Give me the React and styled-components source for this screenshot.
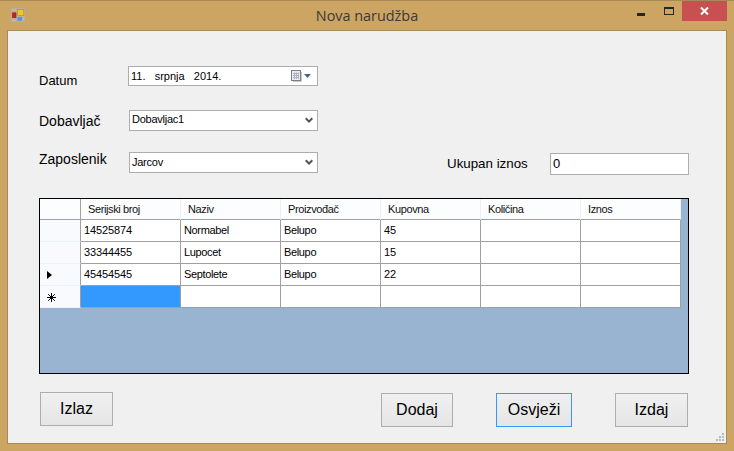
import React from 'react'
import styled, { createGlobalStyle } from 'styled-components'

const columns = ['Serijski broj', 'Naziv', 'Proizvođač', 'Kupovna', 'Količina', 'Iznos']

const rows = [
  { marker: '', cells: ['14525874', 'Normabel', 'Belupo', '45', '', ''] },
  { marker: '', cells: ['33344455', 'Lupocet', 'Belupo', '15', '', ''] },
  { marker: 'current', cells: ['45454545', 'Septolete', 'Belupo', '22', '', ''] },
  { marker: 'new', cells: ['', '', '', '', '', ''], selected: 0 },
]

function Chevron() {
  return (
    <svg width="8" height="7" viewBox="0 0 8 7">
      <path d="M0.7 1.2 L4 4.6 L7.3 1.2" fill="none" stroke="#555" strokeWidth="2" />
    </svg>
  )
}

function CalendarIcon() {
  return (
    <svg width="20" height="12" viewBox="0 0 20 12">
      <rect x="0.5" y="0.5" width="9" height="10" fill="#e9ebf0" stroke="#7d7d82" />
      <path d="M10.5 2V11.5H2" fill="none" stroke="#c9c9c9" />
      <path d="M2 3.5H8M2 5.5H8M2 7.5H8M3.5 2.5V9M5.5 2.5V9M7.5 2.5V9" stroke="#aab4c6" strokeWidth="1" />
      <path d="M13 4 H20 L16.5 8 Z" fill="#4d6185" />
    </svg>
  )
}

function AppIcon() {
  return (
    <svg width="14" height="14" viewBox="0 0 14 14">
      <rect x="0.5" y="0.5" width="13" height="13" fill="#cdb78f" stroke="#b5b0a3" />
      <path d="M1 3.5H5.5M5.5 1V13M1 11H5.5" stroke="#b5b0a3" strokeWidth="1" />
      <rect x="1.4" y="4.8" width="3.6" height="5" fill="#c51f1f" stroke="#8a2a20" strokeWidth="0.6" />
      <rect x="6.4" y="1.4" width="6.4" height="6.2" fill="#f3c52c" stroke="#a98a2a" strokeWidth="0.6" />
      <rect x="6.4" y="8.8" width="4.8" height="4" fill="#5f8fe0" />
    </svg>
  )
}

function RowMarker({ type }) {
  if (type === 'current') {
    return (
      <svg width="5" height="8" viewBox="0 0 5 8">
        <path d="M0 0 L5 4 L0 8 Z" fill="#000" />
      </svg>
    )
  }
  if (type === 'new') {
    return (
      <svg width="9" height="9" viewBox="0 0 9 9">
        <path d="M4.5 0V9M0 4.5H9M1.2 1.2L7.8 7.8M7.8 1.2L1.2 7.8" stroke="#000" strokeWidth="1" />
      </svg>
    )
  }
  return null
}

function App() {
  return (
    <Window>
      <GlobalStyle />
      <TitleBar>
        <IconSlot><AppIcon /></IconSlot>
        <Title>Nova narudžba</Title>
        <Controls>
          <Minimize><span /></Minimize>
          <Maximize><span /></Maximize>
          <Close>
            <svg width="9" height="8" viewBox="0 0 9 8">
              <path d="M1 0.5 L8 7.5 M8 0.5 L1 7.5" stroke="#fff" strokeWidth="2" />
            </svg>
          </Close>
        </Controls>
      </TitleBar>

      <Client>
        <FormRow $top={35}>
          <Label $shift={7} $size={13}>Datum</Label>
          <DateBox>
            <span>11.&nbsp;&nbsp;&nbsp;srpnja&nbsp;&nbsp;&nbsp;2014.</span>
            <CalendarIcon />
          </DateBox>
        </FormRow>

        <FormRow $top={23}>
          <Label $shift={4} $size={14}>Dobavljač</Label>
          <Combo>
            <ComboText $lift={3}>Dobavljac1</ComboText>
            <Chevron />
          </Combo>
        </FormRow>

        <FormRow $top={21}>
          <Label $shift={0} $size={14}>Zaposlenik</Label>
          <Combo>
            <ComboText $lift={1}>Jarcov</ComboText>
            <Chevron />
          </Combo>
          <TotalLabel>Ukupan iznos</TotalLabel>
          <TextBox>0</TextBox>
        </FormRow>

        <DataGrid>
          <HeaderRow>
            <Corner />
            {columns.map((c) => (
              <HeaderCell key={c}>{c}</HeaderCell>
            ))}
          </HeaderRow>
          {rows.map((row, i) => (
            <Row key={i}>
              <RowHeader><RowMarker type={row.marker} /></RowHeader>
              {row.cells.map((cell, j) => (
                <Cell key={j} $selected={row.selected === j} $word={/[a-z]/i.test(cell)}>{cell}</Cell>
              ))}
            </Row>
          ))}
        </DataGrid>

        <ButtonRow>
          <Button $width={73}>Izlaz</Button>
          <RightButtons>
            <Button $width={72}>Dodaj</Button>
            <Button $width={76} $focused>Osvježi</Button>
            <Button $width={73}>Izdaj</Button>
          </RightButtons>
        </ButtonRow>

        <Grip>
          <svg width="9" height="9" viewBox="0 0 9 9">
            <path d="M6 0h2v2h-2zM3 3h2v2h-2zM6 3h2v2h-2zM0 6h2v2h-2zM3 6h2v2h-2zM6 6h2v2h-2z" fill="#b9b9b9" />
          </svg>
        </Grip>
      </Client>
    </Window>
  )
}

const GlobalStyle = createGlobalStyle`
  html, body {
    margin: 0;
    padding: 0;
    background: #cda562;
  }
`

const Window = styled.div`
  width: 734px;
  height: 451px;
  box-sizing: border-box;
  padding: 0 7px 7px;
  background: #cda562;
  border-top: 1px solid #a88a56;
  font-family: 'Liberation Sans', Arial, sans-serif;
  color: #000;
  overflow: hidden;
`

const TitleBar = styled.div`
  height: 29px;
  display: grid;
  grid-template-columns: 1fr auto 1fr;
  align-items: start;
`

const IconSlot = styled.div`
  display: flex;
  padding: 7px 0 0 4px;
`

const Title = styled.div`
  font-family: 'Open Sans', sans-serif;
  font-size: 14.4px;
  line-height: 19px;
  padding-top: 5px;
  color: #3a3a3a;
`

const Controls = styled.div`
  justify-self: end;
  display: flex;
`

const ControlButton = styled.div`
  height: 20px;
  display: flex;
  align-items: center;
  justify-content: center;
`

const Minimize = styled(ControlButton)`
  width: 26px;
  margin-right: 2px;
  span {
    width: 8px;
    height: 3px;
    margin-top: 7px;
    background: #262626;
  }
`

const Maximize = styled(ControlButton)`
  width: 26px;
  span {
    width: 8px;
    height: 5px;
    border: 1px solid #262626;
    border-top-width: 2px;
  }
`

const Close = styled(ControlButton)`
  width: 45px;
  background: #c75050;
`

const Client = styled.div`
  position: relative;
  height: 414px;
  background: #f0f0f0;
  border: 1px solid #a88a56;
  box-sizing: border-box;
  padding: 0 0 0 31px;
`

const FormRow = styled.div`
  display: flex;
  align-items: flex-start;
  height: 21px;
  margin-top: ${(p) => p.$top}px;
`

const Label = styled.div`
  width: 90px;
  font-size: ${(p) => p.$size}px;
  line-height: 15px;
  padding-top: ${(p) => p.$shift}px;
  flex: none;
`

const DateBox = styled.div`
  width: 190px;
  height: 20px;
  margin-left: -1px;
  box-sizing: border-box;
  border: 1px solid #abadb3;
  background: #fff;
  display: flex;
  align-items: center;
  justify-content: space-between;
  padding: 0 6px 0 2px;
  font-size: 11px;
`

const Combo = styled.div`
  width: 189px;
  height: 21px;
  flex: none;
  box-sizing: border-box;
  border: 1px solid #abadb3;
  background: #fff;
  display: flex;
  align-items: center;
  justify-content: space-between;
  padding: 0 4px 0 2px;
  font-size: 11px;
`

const ComboText = styled.span`
  letter-spacing: -0.25px;
  margin-bottom: ${(p) => p.$lift}px;
`

const TotalLabel = styled.div`
  font-size: 13.33px;
  line-height: 15px;
  margin-left: 129px;
  padding-top: 4px;
  width: 103px;
  flex: none;
`

const TextBox = styled.div`
  width: 139px;
  height: 22px;
  flex: none;
  margin-top: 1px;
  box-sizing: border-box;
  border: 1px solid #abadb3;
  background: #fff;
  font-size: 13px;
  line-height: 20px;
  padding-left: 2px;
`

const DataGrid = styled.div`
  width: 650px;
  height: 176px;
  margin-top: 25px;
  box-sizing: border-box;
  border: 1px solid #000;
  background: #99b4d1;
  font-size: 11px;
`

const HeaderRow = styled.div`
  display: grid;
  grid-template-columns: 41px repeat(6, 100px);
  height: 21px;
`

const Row = styled.div`
  display: grid;
  grid-template-columns: 41px repeat(6, 100px);
  height: 22px;
`

const Corner = styled.div`
  background: #fcfdfe;
  border-right: 1px solid #a0a0a0;
  border-bottom: 1px solid #a0a0a0;
  box-sizing: border-box;
`

const HeaderCell = styled.div`
  background: #fcfdfe;
  border-right: 1px solid #eaf1fb;
  border-bottom: 1px solid #a0a0a0;
  box-sizing: border-box;
  padding-left: 7px;
  line-height: 20px;
  letter-spacing: -0.38px;
  color: #111;
`

const RowHeader = styled.div`
  background: #f8fafd;
  border-right: 1px solid #a0a0a0;
  border-bottom: 1px solid #eaf1fb;
  box-sizing: border-box;
  display: flex;
  align-items: center;
  padding: 1px 0 0 7px;
`

const Cell = styled.div`
  background: ${(p) => (p.$selected ? '#3399ff' : '#fff')};
  border-right: 1px solid #a0a0a0;
  border-bottom: 1px solid #a0a0a0;
  box-sizing: border-box;
  padding-left: 3px;
  line-height: 21px;
  letter-spacing: ${(p) => (p.$word ? '-0.35px' : '-0.1px')};
`

const ButtonRow = styled.div`
  display: flex;
  align-items: flex-start;
  justify-content: space-between;
  width: 648px;
  margin: 18px 0 0 1px;
`

const RightButtons = styled.div`
  display: flex;
  margin-top: 1px;
  gap: 43px;
`

const Button = styled.div`
  width: ${(p) => p.$width}px;
  height: 34px;
  box-sizing: border-box;
  border: 1px solid ${(p) => (p.$focused ? '#3399ff' : '#adadad')};
  background: linear-gradient(#f0f0f0, #e5e5e5);
  display: flex;
  align-items: center;
  justify-content: center;
  font-size: 16px;
`

const Grip = styled.div`
  position: absolute;
  right: 1px;
  bottom: 1px;
  display: flex;
`

export default App
